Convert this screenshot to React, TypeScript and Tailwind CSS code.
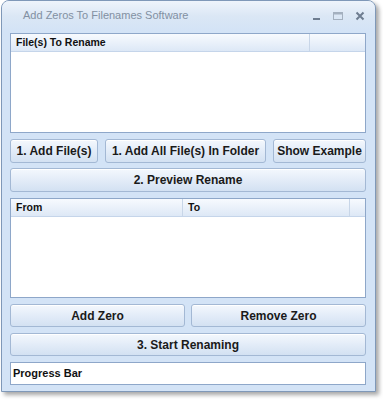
const btn =
  "flex items-center justify-center rounded-[3px] border border-[#a3b8d4] bg-gradient-to-b from-[#f4f8fd] via-[#e3ecf8] to-[#d3e1f2] text-[12px] font-bold text-[#1a1a1a] shadow-[inset_0_1px_0_#ffffff]";

function ListBox({ cols }: { cols: { label: string; w: string }[] }) {
  return (
    <div className="flex flex-col h-[100px] border border-[#8ea7c9] bg-white">
      <div className="flex h-[18px] border-b border-[#c5d5ea] bg-gradient-to-b from-[#f7fafe] to-[#dde8f6]">
        {cols.map((c, i) => (
          <div
            key={i}
            className={`${c.w} flex items-center pl-[5px] text-[10.5px] font-bold text-[#111] border-r border-[#c8d6e8]`}
          >
            {c.label}
          </div>
        ))}
        <div className="flex-1" />
      </div>
      <div className="flex-1" />
    </div>
  );
}

export default function App() {
  return (
    <div className="w-[383px] h-[400px] bg-white" style={{ fontFamily: '"Liberation Sans", Arial, sans-serif' }}>
      <div className="w-[375px] h-[392px] ml-[1px] rounded-t-[8px] border border-[#7f98b8] bg-[#d3e3f6] shadow-[3px_3px_4px_rgba(0,0,0,0.35)]">
        {/* title bar */}
        <div className="flex items-center h-[30px] rounded-t-[7px] bg-gradient-to-b from-[#eef4fb] via-[#dbe7f5] to-[#d3e3f6] pl-[21px] pr-[10px]">
          <span className="text-[11px] text-[#8290a2] mt-[-1px]">Add Zeros To Filenames Software</span>
          <div className="ml-auto flex items-center gap-[12px]">
            <svg width="9" height="9" viewBox="0 0 9 9">
              <rect x="1" y="6" width="7" height="2" fill="#6e7d90" />
            </svg>
            <svg width="10" height="9" viewBox="0 0 10 9">
              <rect x="0.5" y="0.5" width="9" height="7" fill="none" stroke="#a4b0bf" />
              <rect x="0.5" y="0.5" width="9" height="2" fill="#a4b0bf" />
            </svg>
            <svg width="10" height="10" viewBox="0 0 10 10">
              <path d="M1.5 1.5 L8.5 8.5 M8.5 1.5 L1.5 8.5" stroke="#6e7d90" strokeWidth="2" />
            </svg>
          </div>
        </div>

        {/* client */}
        <div className="flex flex-col pl-[8px] pr-[9px] pt-[2px]">
          <ListBox cols={[{ label: "File(s) To Rename", w: "w-[299px]" }]} />

          <div className="flex gap-[7px] mt-[6px] h-[24px]">
            <button className={`${btn} w-[88px]`}>1. Add File(s)</button>
            <button className={`${btn} w-[161px]`}>1. Add All File(s) In Folder</button>
            <button className={`${btn} flex-1`}>Show Example</button>
          </div>

          <button className={`${btn} w-full h-[24px] mt-[5px]`}>2. Preview Rename</button>

          <div className="mt-[6px]">
            <ListBox
              cols={[
                { label: "From", w: "w-[172px]" },
                { label: "To", w: "w-[167px]" },
              ]}
            />
          </div>

          <div className="flex gap-[6px] mt-[6px] h-[23px]">
            <button className={`${btn} flex-1`}>Add Zero</button>
            <button className={`${btn} flex-1`}>Remove Zero</button>
          </div>

          <button className={`${btn} w-full h-[23px] mt-[6px]`}>3. Start Renaming</button>

          <div className="flex items-center h-[23px] mt-[6px] border border-[#8ea7c9] bg-white pl-[2px] text-[11px] font-bold text-[#111]">
            Progress Bar
          </div>
        </div>
      </div>
    </div>
  );
}
